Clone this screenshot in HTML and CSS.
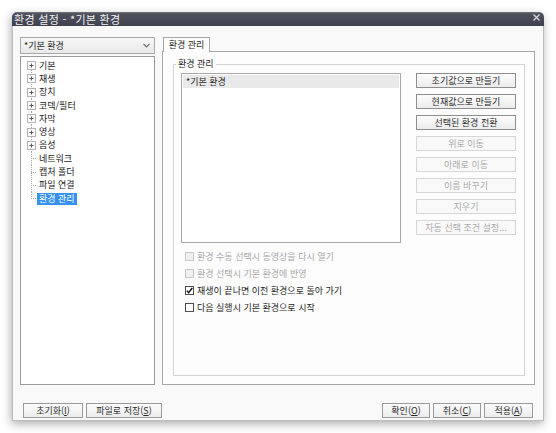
FILE: index.html
```html
<!DOCTYPE html>
<html lang="ko">
<head>
<meta charset="utf-8">
<title>환경 설정</title>
<link rel="stylesheet" href="styles.css">
</head>
<body>
<div class="window">
  <div class="titlebar">
    <span class="title">환경 설정 - *기본 환경</span>
    <svg class="close" width="7" height="7" viewBox="0 0 7 7"><path d="M0.5 0.5L6.5 6.5M6.5 0.5L0.5 6.5" stroke="#d8d8dc" stroke-width="1.3"/></svg>
  </div>
  <div class="client">
    <div class="main">
      <div class="leftcol">
        <div class="combo">
          <span>*기본 환경</span>
          <svg width="7" height="5" viewBox="0 0 7 5"><path d="M0.5 0.8L3.5 3.8L6.5 0.8" fill="none" stroke="#6a6a6a" stroke-width="1.2"/></svg>
        </div>
        <div class="tree">
          <div class="row first"><span class="twig"><svg class="pbox" width="9" height="9" viewBox="0 0 9 9"><rect x="0.5" y="0.5" width="8" height="8" fill="#fbfbfb" stroke="#b4b4b4"/><path d="M2.5 4.5H6.5M4.5 2.5V6.5" stroke="#5a5a5a"/></svg></span><span class="label">기본</span></div>
          <div class="row"><span class="twig"><svg class="pbox" width="9" height="9" viewBox="0 0 9 9"><rect x="0.5" y="0.5" width="8" height="8" fill="#fbfbfb" stroke="#b4b4b4"/><path d="M2.5 4.5H6.5M4.5 2.5V6.5" stroke="#5a5a5a"/></svg></span><span class="label">재생</span></div>
          <div class="row"><span class="twig"><svg class="pbox" width="9" height="9" viewBox="0 0 9 9"><rect x="0.5" y="0.5" width="8" height="8" fill="#fbfbfb" stroke="#b4b4b4"/><path d="M2.5 4.5H6.5M4.5 2.5V6.5" stroke="#5a5a5a"/></svg></span><span class="label">장치</span></div>
          <div class="row"><span class="twig"><svg class="pbox" width="9" height="9" viewBox="0 0 9 9"><rect x="0.5" y="0.5" width="8" height="8" fill="#fbfbfb" stroke="#b4b4b4"/><path d="M2.5 4.5H6.5M4.5 2.5V6.5" stroke="#5a5a5a"/></svg></span><span class="label">코덱/필터</span></div>
          <div class="row"><span class="twig"><svg class="pbox" width="9" height="9" viewBox="0 0 9 9"><rect x="0.5" y="0.5" width="8" height="8" fill="#fbfbfb" stroke="#b4b4b4"/><path d="M2.5 4.5H6.5M4.5 2.5V6.5" stroke="#5a5a5a"/></svg></span><span class="label">자막</span></div>
          <div class="row"><span class="twig"><svg class="pbox" width="9" height="9" viewBox="0 0 9 9"><rect x="0.5" y="0.5" width="8" height="8" fill="#fbfbfb" stroke="#b4b4b4"/><path d="M2.5 4.5H6.5M4.5 2.5V6.5" stroke="#5a5a5a"/></svg></span><span class="label">영상</span></div>
          <div class="row"><span class="twig"><svg class="pbox" width="9" height="9" viewBox="0 0 9 9"><rect x="0.5" y="0.5" width="8" height="8" fill="#fbfbfb" stroke="#b4b4b4"/><path d="M2.5 4.5H6.5M4.5 2.5V6.5" stroke="#5a5a5a"/></svg></span><span class="label">음성</span></div>
          <div class="row"><span class="twig"></span><span class="label">네트워크</span></div>
          <div class="row"><span class="twig"></span><span class="label">캡처 폴더</span></div>
          <div class="row"><span class="twig"></span><span class="label">파일 연결</span></div>
          <div class="row last"><span class="twig"></span><span class="label selected">환경 관리</span></div>
        </div>
      </div>
      <div class="rightcol">
        <div class="tabs"><div class="tab">환경 관리</div></div>
        <div class="panel">
          <fieldset class="group">
            <legend>환경 관리</legend>
            <div class="top">
              <div class="list"><div class="item">*기본 환경</div></div>
              <div class="btns">
                <div class="btn">초기값으로 만들기</div>
                <div class="btn">현재값으로 만들기</div>
                <div class="btn">선택된 환경 전환</div>
                <div class="btn disabled">위로 이동</div>
                <div class="btn disabled">아래로 이동</div>
                <div class="btn disabled">이름 바꾸기</div>
                <div class="btn disabled">지우기</div>
                <div class="btn disabled">자동 선택 조건 설정...</div>
              </div>
            </div>
            <div class="checks">
              <div class="check disabled"><span class="cbox"></span><span>환경 수동 선택시 동영상을 다시 열기</span></div>
              <div class="check disabled"><span class="cbox"></span><span>환경 선택시 기본 환경에 반영</span></div>
              <div class="check"><span class="cbox"><svg width="7" height="7" viewBox="0 0 7 7"><path d="M0.8 3.6L2.6 5.6L6.3 1" fill="none" stroke="#111" stroke-width="1.4"/></svg></span><span>재생이 끝나면 이전 환경으로 돌아 가기</span></div>
              <div class="check"><span class="cbox"></span><span>다음 실행시 기본 환경으로 시작</span></div>
            </div>
          </fieldset>
        </div>
      </div>
    </div>
    <div class="footer">
      <div class="fgroup">
        <div class="btn w60">초기화(<u>I</u>)</div>
        <div class="btn w76">파일로 저장(<u>S</u>)</div>
      </div>
      <div class="fgroup">
        <div class="btn w48">확인(<u>O</u>)</div>
        <div class="btn w48">취소(<u>C</u>)</div>
        <div class="btn w49">적용(<u>A</u>)</div>
      </div>
    </div>
  </div>
</div>
</body>
</html>
```
FILE: styles.css
```css
* { box-sizing: border-box; }
html, body {
  margin: 0;
  padding: 0;
  background: #ffffff;
}
body {
  font-family: "Noto Sans CJK KR", "Noto Sans", sans-serif;
  font-size: 9px;
  color: #222;
  width: 556px;
  height: 433px;
  overflow: hidden;
}
.window {
  margin: 12px 0 0 12px;
  width: 532px;
  height: 409px;
  border-radius: 5px 5px 0 0;
  box-shadow: -1px 3px 10px rgba(0, 0, 0, 0.32);
  display: flex;
  flex-direction: column;
}
.titlebar {
  height: 14px;
  flex: none;
  background: linear-gradient(#72747e 0, #4d4f5b 2px, #404250 100%);
  border-radius: 5px 5px 0 0;
  display: flex;
  align-items: center;
  justify-content: space-between;
  padding: 0 4px 0 2px;
}
.title {
  color: #f2f2f4;
  font-size: 11px;
  line-height: 13px;
  letter-spacing: 0.3px;
}
.close { margin-top: -3px; }
.client {
  flex: 1;
  background: #f9f9f9;
  border: 1px solid #bdbdbd;
  border-top: none;
  display: flex;
  flex-direction: column;
}
.main {
  display: flex;
  gap: 7px;
  padding: 11px 8px 0 7px;
}
.leftcol {
  width: 135px;
  display: flex;
  flex-direction: column;
  gap: 2px;
}
.combo {
  height: 17px;
  border: 1px solid #a9a9a9;
  background: linear-gradient(#f7f7f7, #e9e9e9);
  display: flex;
  align-items: center;
  justify-content: space-between;
  padding: 0 4px 0 3px;
  color: #1e1e1e;
}
.tree {
  height: 329px;
  border: 1px solid #9c9c9c;
  background: #ffffff;
  padding: 2px 0 0 6px;
}
.row {
  height: 13.3px;
  display: flex;
  align-items: center;
  color: #1a1a1a;
}
.twig {
  width: 10px;
  height: 100%;
  display: flex;
  align-items: center;
  background-image:
    repeating-linear-gradient(to bottom, #a8a8a8 0 1px, transparent 1px 2px),
    repeating-linear-gradient(to right, #a8a8a8 0 1px, transparent 1px 2px);
  background-size: 1px 100%, 6px 1px;
  background-position: 4px 0, 4px 50%;
  background-repeat: no-repeat;
}
.row.first .twig {
  background-size: 1px 50%, 6px 1px;
  background-position: 4px 100%, 4px 50%;
}
.row.last .twig {
  background-size: 1px 50%, 6px 1px;
  background-position: 4px 0, 4px 50%;
}
.pbox { display: block; }
.label {
  padding: 0 2px;
  line-height: 12px;
  white-space: nowrap;
}
.label.selected {
  background: #3592f2;
  color: #ffffff;
}
.rightcol {
  width: 373px;
  display: flex;
  flex-direction: column;
}
.tabs {
  height: 14px;
  display: flex;
  padding-left: 1px;
}
.tab {
  width: 47px;
  height: 15px;
  border: 1px solid #a6a6a6;
  border-bottom: none;
  background: #fdfdfd;
  text-align: center;
  line-height: 14px;
  position: relative;
  z-index: 1;
  color: #1e1e1e;
}
.panel {
  height: 334px;
  border: 1px solid #a6a6a6;
  background: #fdfdfd;
  padding: 6px 9px 0 10px;
}
.group {
  margin: 0;
  height: 318px;
  border: 1px solid #d4d4d4;
  padding: 3px 7px 0 7px;
  min-width: 0;
}
.group legend {
  padding: 0 2px;
  margin-left: -5px;
  line-height: 12px;
  color: #1e1e1e;
}
.top {
  display: flex;
  gap: 15px;
}
.list {
  width: 220px;
  height: 170px;
  border: 1px solid #a9a9a9;
  background: #ffffff;
  padding: 1px;
}
.item {
  height: 13px;
  line-height: 13px;
  background: #e9e9e9;
  padding-left: 3px;
  color: #1e1e1e;
}
.btns {
  width: 101px;
  display: flex;
  flex-direction: column;
  gap: 6px;
}
.btn {
  height: 15px;
  border: 1px solid #8e8e8e;
  background: linear-gradient(#fcfcfc, #ececec);
  text-align: center;
  line-height: 13px;
  color: #2a2a2a;
  white-space: nowrap;
}
.btns .btn { width: 100px; }
.btn.disabled {
  border-color: #d6d6d6;
  background: #f9f9f9;
  color: #a9a9a9;
}
.btn u { text-underline-offset: 1px; }
.checks {
  margin-top: 5px;
  padding-left: 4px;
}
.check {
  height: 17px;
  display: flex;
  align-items: center;
  gap: 3px;
  color: #1e1e1e;
}
.cbox {
  width: 9px;
  height: 9px;
  border: 1px solid #4e4e4e;
  background: #ffffff;
  display: flex;
  align-items: center;
  justify-content: center;
}
.check.disabled { color: #a6a6a6; }
.check.disabled .cbox {
  border-color: #c8c8c8;
  background: #efefef;
}
.footer {
  display: flex;
  justify-content: space-between;
  padding: 17px 10px 0 10px;
  border-top: 1px solid transparent;
}
.fgroup {
  display: flex;
  gap: 3px;
}
.fgroup .btn { border-color: #9a9a9a; }
.w60 { width: 60px; }
.w76 { width: 76px; }
.w48 { width: 48px; }
.w49 { width: 49px; }
```
